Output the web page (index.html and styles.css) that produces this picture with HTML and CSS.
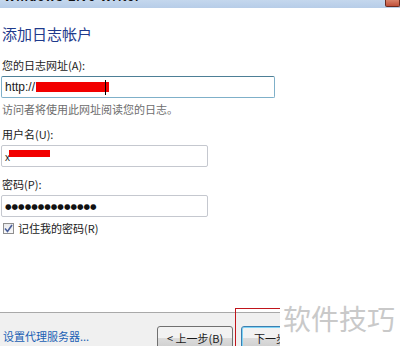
FILE: index.html
```html
<!DOCTYPE html>
<html lang="zh-CN">
<head>
    <meta charset="UTF-8">
    <title>Windows Live Writer</title>
    <link rel="stylesheet" href="styles.css">
</head>
<body>

<div class="titlebar">
	<span class="title-text">Windows Live Writer</span>
	<span class="close-btn"></span>
</div>

<div class="content">
	<h1 class="heading">添加日志帐户</h1>

	<label class="field-label">您的日志网址(A):</label>
	<div class="input input-focus">
		<span>http://</span><span class="redact redact-url"></span><span class="caret"></span>
	</div>
	<p class="hint">访问者将使用此网址阅读您的日志。</p>

	<label class="field-label label-user">用户名(U):</label>
	<div class="input input-short">
		<span class="x-char">x</span><span class="redact redact-user"></span>
	</div>

	<label class="field-label label-pass">密码(P):</label>
	<div class="input input-short dots">●●●●●●●●●●●●●●</div>

	<div class="check-row">
		<span class="checkbox">
			<svg width="9" height="9" viewBox="0 0 9 9"><path d="M1 4.5 L3.5 7.5 L8 1" fill="none" stroke="#4a5f9a" stroke-width="1.6"/></svg>
		</span>
		<span>记住我的密码(R)</span>
	</div>
</div>

<div class="footer">
	<a class="proxy-link">设置代理服务器...</a>
	<div class="buttons">
		<button class="btn">&lt; 上一步(B)</button>
		<button class="btn btn-default">下一步</button>
	</div>
</div>

<div class="highlight"></div>
<div class="watermark">软件技巧</div>

</body>
</html>
```

FILE: styles.css
```css
*{
	padding: 0;
	margin: 0;
	box-sizing: border-box;
}

html{
	height: 346px;
	overflow: hidden;
}

body{
	width: 400px;
	height: 346px;
	overflow: hidden;
	position: relative;
	background-color: white;
	font-family: "Noto Sans CJK SC", "Noto Sans", sans-serif;
	font-size: 11px;
	color: #1a1a1a;
	display: flex;
	flex-direction: column;
}

.titlebar{
	height: 8px;
	flex-shrink: 0;
	background: linear-gradient(#c4d7ed, #b7cde8);
	overflow: hidden;
	display: flex;
	justify-content: space-between;
	align-items: flex-start;
}

.title-text{
	font-family: "Liberation Sans", sans-serif;
	font-size: 12px;
	font-weight: bold;
	line-height: 12px;
	margin-top: -9px;
	margin-left: 4px;
	letter-spacing: 1px;
	color: #111;
}

.close-btn{
	width: 15px;
	height: 7px;
	background: linear-gradient(#d9826a, #c0503a);
	border: 1px solid #6b2a1d;
	border-top: none;
	border-radius: 0 0 2px 2px;
}

.content{
	padding-left: 1px;
	display: flex;
	flex-direction: column;
	align-items: flex-start;
}

.heading{
	font-size: 15px;
	font-weight: normal;
	line-height: 20px;
	color: #1e3a8c;
	margin-top: 16px;
	margin-left: 1px;
}

.field-label{
	font-size: 11px;
	line-height: 16px;
	margin-top: 13px;
	margin-left: 1px;
}

.label-user{
	margin-top: 9px;
}

.label-pass{
	margin-top: 9px;
}

.input{
	height: 22px;
	margin-top: 3px;
	border: 1px solid #c5c8cf;
	border-radius: 2px;
	background: white;
	display: flex;
	align-items: center;
	padding-left: 3px;
	font-family: "Liberation Sans", sans-serif;
	font-size: 12px;
}

.input-focus{
	width: 274px;
	border-color: #7fb0c9;
	border-top-color: #4d7f96;
}

.input-short{
	width: 207px;
}

.redact{
	display: inline-block;
	background: #f20000;
}

.redact-url{
	width: 73px;
	height: 10px;
	margin-left: 1px;
}

.caret{
	width: 1px;
	height: 15px;
	background: black;
	margin-left: -4px;
}

.x-char{
	font-size: 10px;
	margin-top: 3px;
}

.redact-user{
	width: 41px;
	height: 7px;
	margin-top: -6px;
	margin-left: -1px;
}

.dots{
	font-family: "DejaVu Sans", sans-serif;
	font-size: 7.5px;
	color: #111;
	padding-left: 3px;
}

.hint{
	font-size: 11px;
	line-height: 16px;
	color: #6d6d6d;
	margin-top: 3px;
	margin-left: 1px;
}

.check-row{
	display: flex;
	align-items: center;
	gap: 4px;
	margin-top: 4px;
	margin-left: 2px;
	line-height: 14px;
}

.checkbox{
	width: 11px;
	height: 11px;
	border: 1px solid #8f8f8f;
	background: linear-gradient(#e9eaec, #f9f9fa);
	display: flex;
	justify-content: center;
	align-items: center;
}

.footer{
	margin-top: auto;
	height: 34px;
	flex-shrink: 0;
	overflow: hidden;
	border-top: 1px solid #a9a9a9;
	background: #f0f0f0;
	display: flex;
	justify-content: space-between;
	align-items: flex-start;
	padding: 13px 120px 0 3px;
}

.proxy-link{
	color: #1a5fb4;
	font-size: 11px;
	line-height: 17px;
	margin-top: 2px;
}

.buttons{
	display: flex;
	gap: 8px;
	width: 123px;
	overflow: hidden;
}

.btn{
	width: 76px;
	height: 23px;
	flex-shrink: 0;
	border: 1px solid #707070;
	border-radius: 3px;
	background: linear-gradient(#f2f2f2 50%, #dddddd 50%, #cfcfcf);
	font-family: "Noto Sans CJK SC", sans-serif;
	font-size: 11px;
	color: #1a1a1a;
}

.btn-default{
	border-color: #3c7fb1;
	box-shadow: inset 0 0 0 1px #7fd3f5;
	text-align: left;
	padding-left: 12px;
}

.highlight{
	position: absolute;
	left: 235px;
	top: 308px;
	width: 80px;
	height: 38px;
	border: 1px solid #c0151b;
	border-bottom: none;
}

.watermark{
	position: absolute;
	left: 280px;
	top: 290px;
	width: 120px;
	height: 56px;
	background: white;
	color: #c9c9c9;
	font-size: 28px;
	line-height: 56px;
	padding-left: 3px;
}
```
